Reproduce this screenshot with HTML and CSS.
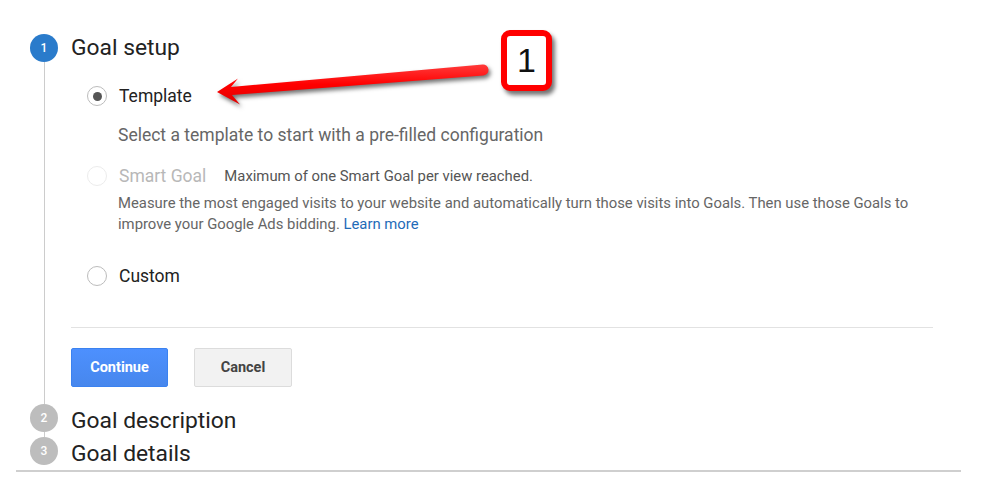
FILE: index.html
```html
<!DOCTYPE html>
<html lang="en">
<head>
<meta charset="utf-8">
<title>Goal setup</title>
<link rel="stylesheet" href="styles.css">
</head>
<body>
<div class="page">
  <div class="steps">
    <div class="step step-1">
      <div class="rail"><span class="num active">1</span><span class="line"></span></div>
      <div class="body">
        <h2 class="title">Goal setup</h2>
        <div class="radio-row row-template">
          <span class="radio checked"></span><span class="label">Template</span>
        </div>
        <p class="hint">Select a template to start with a pre-filled configuration</p>
        <div class="radio-row row-smart">
          <span class="radio disabled"></span><span class="label disabled">Smart Goal</span>
          <span class="note">Maximum of one Smart Goal per view reached.</span>
        </div>
        <p class="desc">Measure the most engaged visits to your website and automatically turn those visits into Goals. Then use those Goals to improve your Google Ads bidding. <a href="#" class="link">Learn more</a></p>
        <div class="radio-row row-custom">
          <span class="radio"></span><span class="label">Custom</span>
        </div>
        <hr class="divider">
        <div class="actions">
          <button class="btn btn-primary">Continue</button>
          <button class="btn btn-default">Cancel</button>
        </div>
      </div>
    </div>
    <div class="step step-2">
      <div class="rail"><span class="num">2</span><span class="line"></span></div>
      <div class="body"><h2 class="title">Goal description</h2></div>
    </div>
    <div class="step step-3">
      <div class="rail"><span class="num">3</span></div>
      <div class="body"><h2 class="title">Goal details</h2></div>
    </div>
  </div>
  <div class="bottom-rule"></div>

  <svg class="arrow" width="380" height="100" viewBox="0 0 380 100" aria-hidden="true">
    <defs>
      <linearGradient id="red" x1="0" y1="0" x2="0" y2="1">
        <stop offset="0" stop-color="#ff3b3b"/>
        <stop offset="0.5" stop-color="#ff0000"/>
        <stop offset="1" stop-color="#e00000"/>
      </linearGradient>
    </defs>
    <path d="M282.6,44.5 L31,67 L38,58.5 L17,72 L40,84.5 L32,75 L283.4,55.5 A5.5,5.5 0 0 0 282.6,44.5 Z" fill="url(#red)"/>
  </svg>
  <div class="callout">1</div>
</div>
</body>
</html>
```

FILE: styles.css
```css
* { box-sizing: border-box; }

html, body {
  margin: 0;
  padding: 0;
  background: #ffffff;
}

body {
  font-family: Roboto, "Liberation Sans", Arial, sans-serif;
  color: #212121;
}

.page {
  position: relative;
  width: 1003px;
  height: 482px;
  padding: 34px 0 0 16px;
}

.steps {
  padding-left: 14px;
}

.step {
  display: grid;
  grid-template-columns: 28px 1fr;
  column-gap: 13px;
}

.rail {
  display: flex;
  flex-direction: column;
  align-items: center;
}

.num {
  width: 28px;
  height: 28px;
  border-radius: 50%;
  background: #bdbdbd;
  color: #ffffff;
  font-size: 12px;
  font-weight: 500;
  display: flex;
  align-items: center;
  justify-content: center;
  flex: none;
}

.num.active {
  background: #2a7bcb;
}

.line {
  flex: 1;
  width: 1px;
  background: #cccccc;
}

.title {
  margin: 0;
  font-size: 22.8px;
  font-weight: 400;
  line-height: 28px;
  color: #222222;
}

.step-2 .title,
.step-3 .title {
  padding-top: 3px;
  margin-bottom: -3px;
}

.step-1 .body {
  padding-bottom: 17px;
}

.step-2 .body {
  padding-bottom: 5px;
}

.radio-row {
  display: flex;
  align-items: center;
  height: 24px;
  padding-left: 16px;
}

.row-template { margin-top: 22px; }
.row-smart { margin-top: 19px; }
.row-custom { margin-top: 29px; }

.radio {
  width: 20px;
  height: 20px;
  border-radius: 50%;
  border: 1px solid #bcbcbc;
  background: #fff;
  display: flex;
  align-items: center;
  justify-content: center;
  flex: none;
}

.radio.checked::after {
  content: "";
  width: 9px;
  height: 9px;
  border-radius: 50%;
  background: #555555;
}

.radio.disabled {
  border-color: #ececec;
}

.label {
  margin-left: 12px;
  font-size: 17.5px;
  color: #222222;
}

.label.disabled {
  color: #b8b8b8;
}

.note {
  margin-left: 18px;
  font-size: 14.85px;
  color: #555555;
}

.hint {
  margin: 17px 0 0;
  padding-left: 47px;
  font-size: 17.5px;
  line-height: 20px;
  color: #666666;
}

.desc {
  margin: 5px 0 0;
  padding-left: 47px;
  width: 850px;
  font-size: 14.85px;
  line-height: 21px;
  color: #666666;
}

.link {
  color: #1f6bb8;
  text-decoration: none;
}

.divider {
  margin: 39px 0 0;
  width: 862px;
  border: 0;
  border-top: 1px solid #e2e2e2;
  height: 0;
}

.actions {
  display: flex;
  gap: 26px;
  margin-top: 20px;
}

.btn {
  height: 39px;
  border-radius: 2px;
  font-family: Roboto, "Liberation Sans", Arial, sans-serif;
  font-size: 14.5px;
  font-weight: 700;
  padding: 0;
}

.btn-primary {
  width: 97px;
  background: linear-gradient(#4d90fe, #4787ed);
  border: 1px solid #3b82f0;
  color: #ffffff;
}

.btn-default {
  width: 98px;
  background: #f2f2f2;
  border: 1px solid #dcdcdc;
  color: #444444;
}

.bottom-rule {
  margin-top: 5px;
  width: 945px;
  height: 2px;
  background: #cfcfcf;
}

.arrow {
  position: absolute;
  left: 200px;
  top: 20px;
  filter: drop-shadow(2px 3px 2px rgba(0, 0, 0, 0.55));
}

.callout {
  position: absolute;
  left: 501px;
  top: 30px;
  width: 51px;
  height: 61px;
  border: 6px solid #ff0000;
  border-radius: 9px;
  background: #ffffff;
  box-shadow: 3px 4px 4px rgba(0, 0, 0, 0.55);
  display: flex;
  align-items: center;
  justify-content: center;
  font-family: "Liberation Sans", Arial, sans-serif;
  font-size: 34px;
  color: #111111;
}
```
